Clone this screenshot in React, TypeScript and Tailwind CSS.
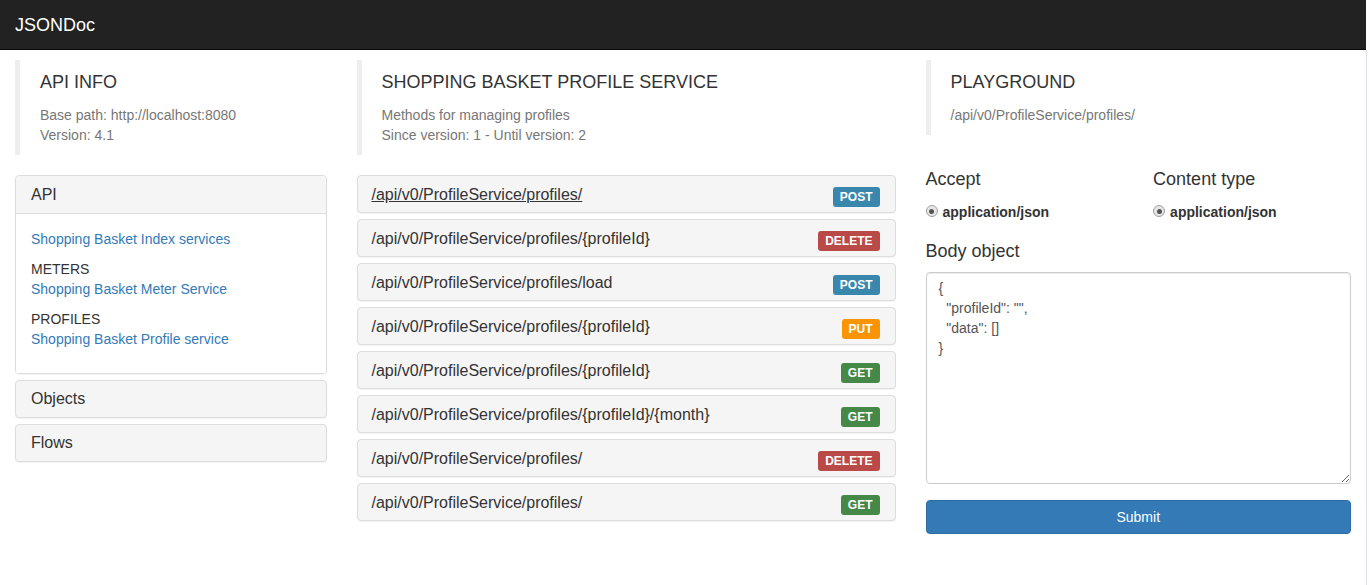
import React from "react";

const endpoints: { path: string; method: string; hover?: boolean }[] = [
  { path: "/api/v0/ProfileService/profiles/", method: "POST", hover: true },
  { path: "/api/v0/ProfileService/profiles/{profileId}", method: "DELETE" },
  { path: "/api/v0/ProfileService/profiles/load", method: "POST" },
  { path: "/api/v0/ProfileService/profiles/{profileId}", method: "PUT" },
  { path: "/api/v0/ProfileService/profiles/{profileId}", method: "GET" },
  { path: "/api/v0/ProfileService/profiles/{profileId}/{month}", method: "GET" },
  { path: "/api/v0/ProfileService/profiles/", method: "DELETE" },
  { path: "/api/v0/ProfileService/profiles/", method: "GET" },
];

function Badge({ method }: { method: string }) {
  const color =
    method === "POST"
      ? "bg-[#3a87ad]"
      : method === "DELETE"
      ? "bg-[#b94a48]"
      : method === "PUT"
      ? "bg-[#f89406]"
      : "bg-[#468847]";
  return (
    <span
      className={`${color} text-white font-bold text-[12px] leading-[12px] h-[20px] px-[7px] rounded-[3px] flex items-center`}
    >
      {method}
    </span>
  );
}

function Radio() {
  return (
    <span className="w-[12px] h-[12px] rounded-full border border-[#a0a0a0] bg-[#e6e6e6] flex items-center justify-center shrink-0">
      <span className="w-[5px] h-[5px] rounded-full bg-[#555]" />
    </span>
  );
}

export default function App() {
  const bodyText = '{\n  "profileId": "",\n  "data": []\n}';
  return (
    <div
      className="w-[1369px] min-h-[585px] bg-white text-[#333] text-[14px] leading-[20px]"
      style={{ fontFamily: '"Liberation Sans", Arial, Helvetica, sans-serif' }}
    >
      <div className="w-[1366px] h-[50px] bg-[#222] border-b border-[#080808] flex items-center px-[15px]">
        <span className="text-white text-[18px] leading-[20px]">JSONDoc</span>
      </div>
      <div className="w-[1367px] min-h-[535px] border-r border-[#dde1ee] px-[15px] pt-[10px] flex">
        {/* Column 1 */}
        <div className="w-[311.5px] shrink-0">
          <div className="border-l-[5px] border-[#eee] pl-[20px] pr-[20px] pt-[12px] pb-[10px] mb-[20px] h-[95px]">
            <div className="text-[18px] leading-[20px] mb-[13px]">API INFO</div>
            <div className="text-[#777]">Base path: http://localhost:8080</div>
            <div className="text-[#777]">Version: 4.1</div>
          </div>
          <div className="flex flex-col gap-[6px]">
            <div className="border border-[#ddd] rounded-[4px] shadow-[0_1px_1px_rgba(0,0,0,0.05)] overflow-hidden">
              <div className="h-[38px] bg-[#f5f5f5] border-b border-[#ddd] px-[15px] flex items-center text-[16px]">
                API
              </div>
              <div className="px-[15px] pt-[15px] pb-[14px] bg-white">
                <div className="mb-[10px] text-[#337ab7]">Shopping Basket Index services</div>
                <div className="mb-[10px]">
                  <div>METERS</div>
                  <div className="text-[#337ab7]">Shopping Basket Meter Service</div>
                </div>
                <div className="mb-[10px]">
                  <div>PROFILES</div>
                  <div className="text-[#337ab7]">Shopping Basket Profile service</div>
                </div>
              </div>
            </div>
            <div className="h-[38px] border border-[#ddd] rounded-[4px] bg-[#f5f5f5] shadow-[0_1px_1px_rgba(0,0,0,0.05)] px-[15px] flex items-center text-[16px]">
              Objects
            </div>
            <div className="h-[38px] border border-[#ddd] rounded-[4px] bg-[#f5f5f5] shadow-[0_1px_1px_rgba(0,0,0,0.05)] px-[15px] flex items-center text-[16px]">
              Flows
            </div>
          </div>
        </div>
        {/* Column 2 */}
        <div className="w-[539px] shrink-0 ml-[30px]">
          <div className="border-l-[5px] border-[#eee] px-[20px] pt-[12px] pb-[10px] mb-[20px] h-[95px]">
            <div className="text-[18px] leading-[20px] mb-[13px]">SHOPPING BASKET PROFILE SERVICE</div>
            <div className="text-[#777]">Methods for managing profiles</div>
            <div className="text-[#777]">Since version: 1 - Until version: 2</div>
          </div>
          <div className="flex flex-col gap-[6px]">
            {endpoints.map((e, i) => (
              <div
                key={i}
                className="h-[38px] border border-[#ddd] rounded-[4px] bg-[#f5f5f5] shadow-[0_1px_1px_rgba(0,0,0,0.05)] pl-[14px] pr-[15px] flex items-center justify-between"
              >
                <span className={`text-[16px] leading-[20px] mt-[2px] ${e.hover ? "underline" : ""}`}>
                  {e.path}
                </span>
                <span className="mt-[5px]">
                  <Badge method={e.method} />
                </span>
              </div>
            ))}
          </div>
        </div>
        {/* Column 3 */}
        <div className="w-[425.5px] shrink-0 ml-[30px]">
          <div className="border-l-[5px] border-[#eee] px-[20px] pt-[12px] pb-[10px] mb-[20px] h-[75px]">
            <div className="text-[18px] leading-[20px] mb-[13px]">PLAYGROUND</div>
            <div className="text-[#777]">/api/v0/ProfileService/profiles/</div>
          </div>
          <div className="flex pt-[14px]">
            <div className="w-[227.6px]">
              <div className="text-[18px] leading-[20px]">Accept</div>
              <div className="flex items-center gap-[5px] mt-[12px] h-[20px]">
                <Radio />
                <span className="font-bold mt-[2px]">application/json</span>
              </div>
            </div>
            <div>
              <div className="text-[18px] leading-[20px]">Content type</div>
              <div className="flex items-center gap-[5px] mt-[12px] h-[20px]">
                <Radio />
                <span className="font-bold mt-[2px]">application/json</span>
              </div>
            </div>
          </div>
          <div className="text-[18px] leading-[20px] mt-[20px]">Body object</div>
          <textarea
            className="block w-full h-[212px] mt-[11px] border border-[#ccc] rounded-[4px] px-[12px] pt-[5px] pb-[6px] text-[14px] leading-[20px] text-[#555] shadow-[inset_0_1px_1px_rgba(0,0,0,0.075)] outline-none"
            style={{ fontFamily: '"Liberation Sans", Arial, Helvetica, sans-serif' }}
            defaultValue={bodyText}
          />
          <button
            className="block w-full h-[34px] mt-[16px] bg-[#337ab7] border border-[#2e6da4] rounded-[4px] text-white text-[14px]"
            style={{ fontFamily: '"Liberation Sans", Arial, Helvetica, sans-serif' }}
          >
            Submit
          </button>
        </div>
      </div>
    </div>
  );
}
